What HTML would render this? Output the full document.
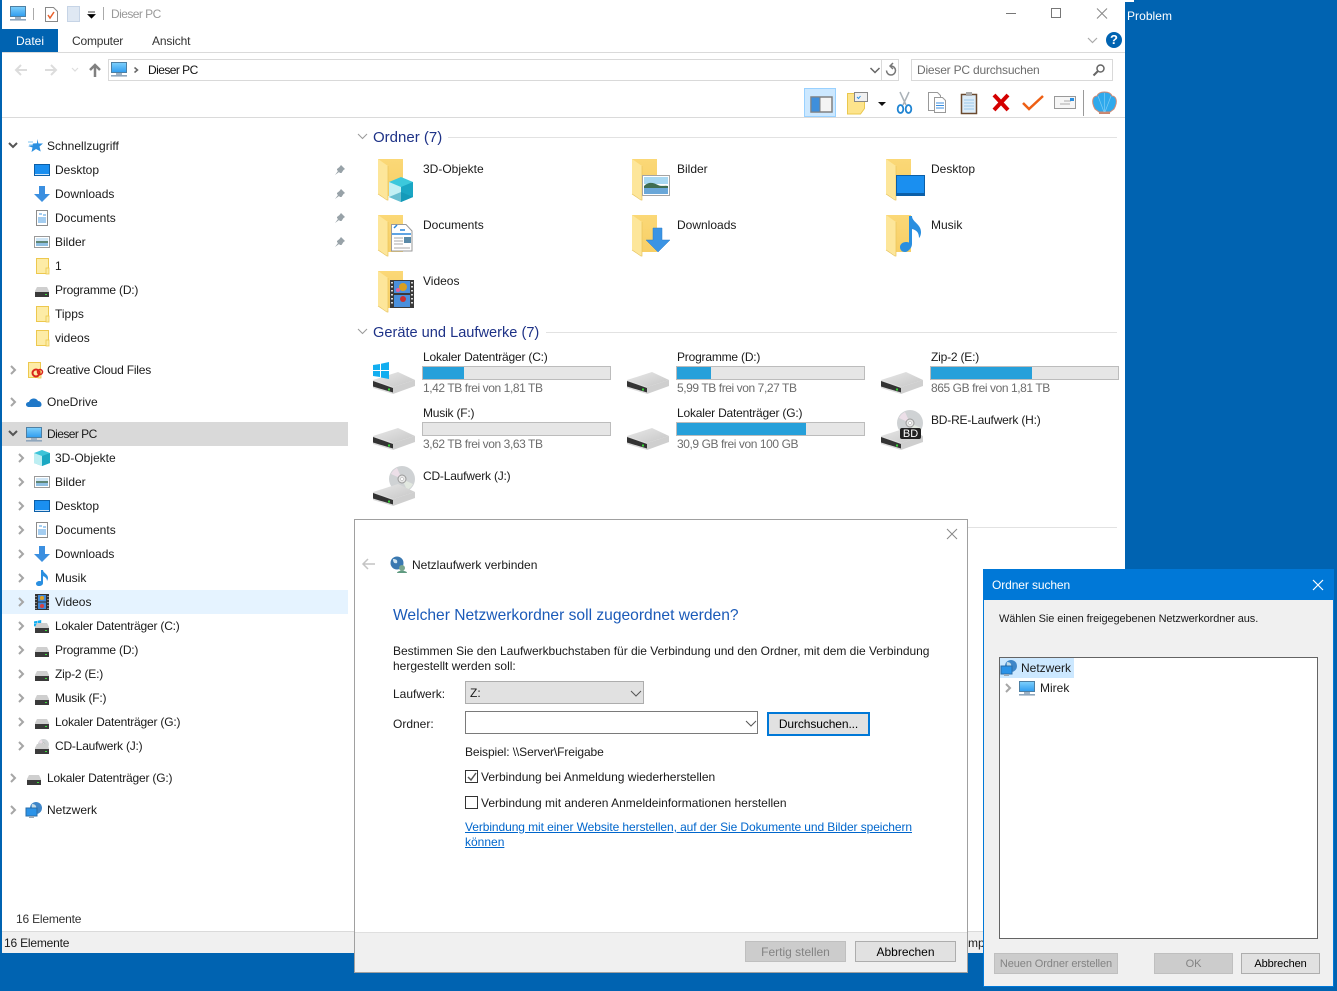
<!DOCTYPE html>
<html lang="de"><head><meta charset="utf-8"><title>Dieser PC</title>
<style>
html,body{margin:0;padding:0;width:1337px;height:991px;overflow:hidden;background:#0063b1;font:12px/16px "Liberation Sans",sans-serif;color:#1a1a1a}
div,span,a{position:absolute;white-space:nowrap}
svg{position:absolute;left:0;top:0;overflow:visible}
#win{left:2px;top:0;width:1123px;height:953px;background:#fff}
.g{color:#6d6d6d;letter-spacing:-.42px}
.l{letter-spacing:-.2px}
.p{letter-spacing:-.55px}
.h{font-size:15px;color:#1e3287;line-height:20px}
.box{box-sizing:border-box}
.bar{box-sizing:border-box;width:189px;height:14px;background:#e6e6e6;border:1px solid #bcbcbc}
.bar i{display:block;height:12px;background:#26a0da}
.btn{box-sizing:border-box;text-align:center;background:#e1e1e1;border:1px solid #adadad;color:#000}
.dis{background:#ccc;border-color:#bfbfbf;color:#838383}
.s{font-size:11px;letter-spacing:-.1px}
</style></head><body>
<svg width="0" height="0" style="position:absolute"><defs>
<linearGradient id="sky" x1="0" y1="0" x2="0" y2="1"><stop offset="0" stop-color="#7fd0fb"/><stop offset="1" stop-color="#2f9df0"/></linearGradient>
<linearGradient id="fo" x1="0" y1="0" x2="0" y2="1"><stop offset="0" stop-color="#fbd877"/><stop offset="1" stop-color="#f7cf66"/></linearGradient>
<linearGradient id="metal" x1="0" y1="0" x2="1" y2="1"><stop offset="0" stop-color="#e8e8e8"/><stop offset="1" stop-color="#c6c6c6"/></linearGradient>
<g id="cr"><path d="M-2-4 2 0-2 4" stroke="#a6a6a6" stroke-width="2" fill="none"/></g>
<g id="cd"><path d="M-4-2 0 2 4-2" stroke="#555" stroke-width="2" fill="none"/></g>
<g id="pc"><rect x=".5" y=".5" width="15" height="10" fill="url(#sky)" stroke="#4d7fa3"/><rect x="5" y="11" width="6" height="2" fill="#9fb2c4"/><rect x="0" y="13" width="16" height="1.6" fill="#8fa6bc"/></g>
<g id="desk"><rect x=".5" y=".5" width="15" height="11" fill="#1a8ff0" stroke="#0b5fa8"/><rect x="1" y="10" width="14" height="1" fill="#cfe6fa"/></g>
<g id="dl"><path d="M5 0h6v8h5l-8 8-8-8h5z" fill="#3b8fe0"/></g>
<g id="doc"><rect x=".5" y=".5" width="11" height="15" fill="#fff" stroke="#8c8c8c"/><path d="M3 4h3M7 5h3M2 8h8M2 10h8M2 12h8" stroke="#4a9be0"/></g>
<g id="pic"><rect x=".5" y=".5" width="15" height="11" fill="#fff" stroke="#9a9a9a"/><rect x="2" y="2" width="12" height="4" fill="#cfe6f6"/><rect x="2" y="5" width="12" height="2" fill="#5f8676"/><rect x="2" y="7" width="12" height="3" fill="#8fbfe2"/></g>
<g id="fs"><rect x=".5" y=".5" width="12" height="15" fill="#fdeca6" stroke="#edc84e"/><rect x="10" y="10" width="3" height="6" fill="#fdeca6" stroke="#edc84e" stroke-width=".8"/></g>
<g id="ds"><path d="M2 0h10l2 4v1H0V4z" fill="#cfcfcf"/><rect y="5" width="14" height="5" fill="#3a3a3a"/><rect x="10" y="7" width="2" height="1" fill="#3ddc3d"/></g>
<g id="pin"><path d="M6 0l4 4-1.500 1-2 3H5L2 5V4l2.500-2zM3 6 0 10l4-3z" fill="#98a2a8"/></g>
<g id="cube"><path d="M0 3 8 0l8 3v10l-8 3-8-3z" fill="#3cc4d8"/><path d="M0 3l8 3v10l-8-3z" fill="#bdeef2"/><path d="M8 6l8-3v10l-8 3z" fill="#1ba8c2"/></g>
<g id="note"><path d="M5 0h2c0 3 5 4 5 8 0 1-.5 2-1 3 0-3-2-4-4-5v7c0 2-2 3-4 3s-3-1-3-2.500S2 11 3.500 11c.5 0 1 0 1.500.3z" fill="#2a8fe0"/></g>
<g id="film"><rect width="14" height="16" fill="#333"/><rect x="3" y="1" width="8" height="6.500" fill="#3f88d8"/><rect x="3" y="8.500" width="8" height="6.500" fill="#3f88d8"/><circle cx="7" cy="4" r="2" fill="#e0a020"/><circle cx="7" cy="12" r="2" fill="#d84040"/><path d="M1 2v1M1 5v1M1 8v1M1 11v1M1 14v1M13 2v1M13 5v1M13 8v1M13 11v1M13 14v1" stroke="#ddd"/></g>
<g id="star"><path d="M9 0l1.500 4.500H15l-3.500 3 1.200 5L8 10l-4.500 3 1-4.500L0 7l4-.5 1-2 4-.2z" fill="#2a8fe0"/><path d="M0 3h5M1 6h4" stroke="#7fc4f2"/></g>
<g id="net"><circle cx="10" cy="6" r="6" fill="#3f86c8"/><path d="M6 2c3 0 5 2 4 5-3 1-5-1-4-5z" fill="#c4dce8"/><rect x="0" y="6" width="11" height="8" fill="#2b93e8" stroke="#2a6da8"/><rect x="3" y="14" width="5" height="2" fill="#99a9b8"/></g>
<g id="bf"><path d="M0 0H25V37H9L0 34z" fill="url(#fo)"/><path d="M0 0 10 7V41L0 35z" fill="#fde69a"/><path d="M10 7V41L9 41 0 35" fill="none" stroke="#e8c35a" stroke-width=".7"/></g>
<g id="bpic"><rect x=".5" y=".5" width="27" height="20" fill="#fff" stroke="#a4a4a4"/><rect x="2" y="2" width="24" height="7" fill="#a8d8f2"/><path d="M2 11c5-5 10-3 14-1s7 0 10 1v2H2z" fill="#3f6e52"/><rect x="2" y="13" width="24" height="6" fill="#6aa7d8"/></g>
<g id="bdoc"><path d="M.5.5H15L21 7V27H.5z" fill="#fff" stroke="#9a9a9a"/><path d="M3 4l3-3M9 6h5M1 10h19" stroke="#2a86da" stroke-width="1.500"/><path d="M3 14h9M3 17h9M3 20h9M3 24h16" stroke="#aaa"/><rect x="13" y="13" width="7" height="6" fill="#5a8aa8"/></g>
<g id="bdl"><path d="M7 0h9V12h8L12 24 0 12H7z" fill="#3b94e4" stroke="#2a7cc8" stroke-width=".5"/></g>
<g id="bfilm"><rect width="24" height="28" fill="#3a3a3a"/><rect x="4" y="1" width="16" height="12" fill="#4a90dc"/><rect x="4" y="15" width="16" height="12" fill="#4a90dc"/><circle cx="13" cy="7" r="4" fill="#d9a020"/><circle cx="13" cy="19" r="3" fill="#c83030"/><circle cx="8" cy="10" r="2" fill="#e060a0"/><path d="M2 2v1.500M2 6v1.500M2 10v1.500M2 14v1.500M2 18v1.500M2 22v1.500M22 2v1.500M22 6v1.500M22 10v1.500M22 14v1.500M22 18v1.500M22 22v1.500" stroke="#ddd" stroke-width="2"/></g>
<g id="bcube"><path d="M0 5 12 0l12 5v15l-12 5-12-5z" fill="#3cc8dc"/><path d="M0 5l12 5v15L0 20z" fill="#c2f0f4"/><path d="M12 10 24 5v15L12 25z" fill="#1aa6c4"/><path d="M0 20l12-5 12 5-12 5z" fill="#0f8eae" opacity=".5"/></g>
<g id="bdesk"><rect x=".5" y=".5" width="28" height="20" fill="#1a8ff0" stroke="#0b5fa8"/><rect x="1" y="18" width="27" height="2" fill="#0b5fa8"/></g>
<g id="bnote"><path d="M9 0h3c0 6 9 8 9 16 0 3-1 5-2 6 0-6-3-8-7-9v15c0 4-4 8-7 8s-5-2-5-5 3-5 6-5c1 0 2 0 3 .6z" fill="#2a8fe0"/></g>
<g id="drv"><path d="M0 8 25 0 42 8 20 15z" fill="url(#metal)"/><path d="M20 15 42 8v6L20 22z" fill="#cfcfcf"/><path d="M0 8 20 15v7L0 16z" fill="#dcdcdc"/><path d="M0 9 20 16v4.500L0 14.500z" fill="#333"/><rect x="15" y="16.500" width="2" height="2" fill="#35d535"/></g>
<g id="cdisc"><circle cx="13" cy="13" r="13" fill="#cfd2d4"/><path d="M13 13 2 8a13 13 0 0 1 6-6z" fill="#ecdfe8"/><path d="M13 13 24 18a13 13 0 0 1-6 6z" fill="#e2e8e0"/><circle cx="13" cy="13" r="4" fill="#e8e8e8" stroke="#999"/><circle cx="13" cy="13" r="1.500" fill="#fff" stroke="#aaa" stroke-width=".5"/></g>
<g id="winl"><path d="M0 3 7 2V8H0zM8 1.800 16 0V8H8zM0 9H7V15L0 14zM8 9H16V17L8 15.500z" fill="#12aef0"/></g>
</defs></svg>

<div id="win"></div>
<svg width="1337" height="991">
<!-- title -->
<use href="#pc" x="10" y="6"/>
<path d="M33.500 8v12M103.500 7v13" stroke="#aaa"/>
<path d="M45.500 7.500h8l4 4v10h-12z" fill="#fff" stroke="#888"/><path d="M48 15l2 3 4-6" stroke="#e8602c" stroke-width="1.500" fill="none"/>
<path d="M67.500 6.500h12v15h-12z" fill="#dfe8f3" stroke="#c6d4e6"/>
<path d="M88 12h7M88 14.500h7l-3.500 3.500z" fill="#000" stroke="#000" stroke-width=".8"/>
<path d="M1006 13.500h10" stroke="#777"/><rect x="1051.500" y="8.500" width="9" height="9" fill="none" stroke="#777"/><path d="M1097 8.500l10 10M1107 8.500l-10 10" stroke="#888"/>
<path d="M1088 38l4.500 4.500L1097 38" stroke="#aaa" fill="none" stroke-width="1.200"/>
<circle cx="1114" cy="40" r="8" fill="#0063b1"/>
<rect x="2" y="52" width="1123" height="1" fill="#dadada"/>
<!-- nav -->
<path d="M27 70H16M21 65l-5 5 5 5" stroke="#dcdcdc" stroke-width="2" fill="none"/>
<path d="M45 70H56M51 65l5 5-5 5" stroke="#dcdcdc" stroke-width="2" fill="none"/>
<path d="M72 68l3 3 3-3" stroke="#ddd" fill="none" stroke-width="1.200"/>
<path d="M95 77V65M90 70l5-5 5 5" stroke="#808080" stroke-width="2.500" fill="none"/>
<rect x="108.500" y="59.500" width="790" height="21" fill="#fff" stroke="#d9d9d9"/>
<path d="M881.500 60v20" stroke="#d9d9d9"/>
<use href="#pc" x="111" y="62"/>
<path d="M134.500 67.500l3 2.500-3 2.500" stroke="#666" fill="none" stroke-width="1.500"/>
<path d="M870.500 68l4.500 4.500 4.500-4.500" stroke="#666" fill="none" stroke-width="1.500"/>
<path d="M891 66a4.500 4.500 0 1 1-4.500 4.500M893 63l-3 3 3 3" stroke="#777" fill="none" stroke-width="1.500"/>
<rect x="911.500" y="59.500" width="201" height="21" fill="#fff" stroke="#d9d9d9"/>
<circle cx="1100.500" cy="68.500" r="3.500" fill="none" stroke="#666" stroke-width="1.500"/><path d="M1098 71l-4.500 4.500" stroke="#666" stroke-width="2"/>
<!-- toolbar -->
<rect x="804.500" y="88.500" width="31" height="28" fill="#cce8ff" stroke="#99d1ff"/>
<rect x="811" y="97" width="21" height="15" fill="#f4f4f4" stroke="#808080" stroke-width="1.500"/><rect x="811" y="97" width="9" height="15" fill="#3f8fdc" stroke="#808080" stroke-width="1"/>
<path d="M847.500 93.500h17v15l-4 5.500h-13z" fill="#fde48c" stroke="#eac84e"/><rect x="854.500" y="92.500" width="13" height="9" fill="#f0f0f0" stroke="#888"/><path d="M857 97l1.500 1.500 2-2.500" stroke="#2a8fe0" fill="none"/>
<path d="M878 102h8l-4 4z" fill="#111"/>
<path d="M900 92l6 13M909 92l-6 13" stroke="#aab2b8" stroke-width="1.500"/><ellipse cx="900.500" cy="109" rx="2.800" ry="4" fill="none" stroke="#1f84d2" stroke-width="1.800"/><ellipse cx="908.500" cy="109" rx="2.800" ry="4" fill="none" stroke="#1f84d2" stroke-width="1.800"/>
<path d="M928.500 92.500h9l3 3v15h-12z" fill="#fff" stroke="#999"/><path d="M934.500 97.500h8l3 3v12h-11z" fill="#fff" stroke="#999"/><path d="M936 103h8M936 105.500h8M936 108h8" stroke="#3b8fe0"/>
<rect x="961.500" y="94.500" width="15" height="19" fill="#dcecf8" stroke="#6b4a2f" stroke-width="1.500"/><rect x="966" y="92" width="6" height="4" fill="#aaa"/><path d="M964 100h10M964 103h10M964 106h10M964 109h10" stroke="#9cc8ea"/>
<path d="M994 95l14 15M1008 95l-14 15" stroke="#d40000" stroke-width="4"/>
<path d="M1023 103l6 6 14-13" stroke="#ee5f14" stroke-width="2.500" fill="none"/>
<rect x="1054.500" y="96.500" width="21" height="12" fill="#f6f6f6" stroke="#999"/><path d="M1060 104h10M1064 101h7" stroke="#aaa"/><rect x="1070" y="98" width="4" height="3" fill="#2a8fe0"/>
<path d="M1083.500 90v26" stroke="#9a9a9a"/>
<rect x="1099" y="110" width="11" height="4" fill="#c9866e"/>
<path d="M1095 109C1090 100 1094 96 1097 96 1098 93 1101 92 1104.500 92 1108 92 1111 93 1112 96 1115 96 1119 100 1114 109L1110 112H1099z" fill="#2fa9ec" stroke="#d18c78"/>
<path d="M1104.500 112V93M1104 112 1098 96M1105 112 1111 96" stroke="#7fcdf5" stroke-width=".7"/>
<rect x="2" y="117" width="1123" height="1" fill="#dadada"/>

<!-- sidebar -->
<rect x="2" y="422" width="346" height="24" fill="#d9d9d9"/>
<rect x="2" y="590" width="346" height="24" fill="#e5f3ff"/>
<use href="#cd" x="13" y="145"/><use href="#star" x="28" y="139"/>
<use href="#desk" x="34" y="164"/><use href="#dl" x="34" y="186"/><use href="#doc" x="36" y="210"/><use href="#pic" x="34" y="236"/>
<use href="#fs" x="36" y="258"/><use href="#ds" x="35" y="287"/><use href="#fs" x="36" y="306"/><use href="#fs" x="36" y="330"/>
<use href="#pin" x="335" y="165"/><use href="#pin" x="335" y="189"/><use href="#pin" x="335" y="213"/><use href="#pin" x="335" y="237"/>
<use href="#cr" x="13" y="370"/><use href="#fs" x="28" y="362"/><circle cx="36" cy="373" r="3.500" fill="none" stroke="#d9261c" stroke-width="2"/><circle cx="40" cy="372" r="2.500" fill="none" stroke="#d9261c" stroke-width="1.500"/>
<use href="#cr" x="13" y="402"/><path d="M29 407c-4 0-4-5 0-5 1-4 7-5 9-1 4 0 5 6 1 6z" fill="#1f78c8"/>
<use href="#cd" x="13" y="433"/><use href="#pc" x="26" y="427"/>
<use href="#cr" x="21" y="458"/><use href="#cube" x="34" y="450"/>
<use href="#cr" x="21" y="482"/><use href="#pic" x="34" y="476"/>
<use href="#cr" x="21" y="506"/><use href="#desk" x="34" y="500"/>
<use href="#cr" x="21" y="530"/><use href="#doc" x="36" y="522"/>
<use href="#cr" x="21" y="554"/><use href="#dl" x="34" y="546"/>
<use href="#cr" x="21" y="578"/><use href="#note" x="36" y="570"/>
<use href="#cr" x="21" y="602"/><use href="#film" x="35" y="594"/>
<use href="#cr" x="21" y="626"/><g transform="translate(34 620) scale(.45)"><use href="#winl"/></g><use href="#ds" x="35" y="623"/>
<use href="#cr" x="21" y="650"/><use href="#ds" x="35" y="647"/>
<use href="#cr" x="21" y="674"/><use href="#ds" x="35" y="671"/>
<use href="#cr" x="21" y="698"/><use href="#ds" x="35" y="695"/>
<use href="#cr" x="21" y="722"/><use href="#ds" x="35" y="719"/>
<use href="#cr" x="21" y="746"/><g transform="translate(38 739) scale(.42)"><use href="#cdisc"/></g><use href="#ds" x="35" y="744"/>
<use href="#cr" x="13" y="778"/><use href="#ds" x="27" y="775"/>
<use href="#cr" x="13" y="810"/><use href="#net" x="26" y="802"/>

<!-- content -->
<path d="M358 134l4.500 4.500 4.500-4.500M358 329l4.500 4.500 4.500-4.500" stroke="#9a9a9a" fill="none"/>
<path d="M448 137.500h669M546 332.500h571M355 527.500h762" stroke="#e2e2e2"/>
<use href="#bf" x="378" y="159"/><use href="#bcube" x="389" y="177"/>
<use href="#bf" x="632" y="159"/><use href="#bpic" x="642" y="175"/>
<use href="#bf" x="886" y="159"/><use href="#bdesk" x="896" y="175"/>
<use href="#bf" x="378" y="215"/><use href="#bdoc" x="391" y="224"/>
<use href="#bf" x="632" y="215"/><use href="#bdl" x="646" y="228"/>
<use href="#bf" x="886" y="215"/><use href="#bnote" x="900" y="216"/>
<use href="#bf" x="378" y="271"/><use href="#bfilm" x="390" y="280"/>
<use href="#drv" x="373" y="372"/><g transform="translate(373 362)"><use href="#winl"/></g>
<use href="#drv" x="627" y="372"/><use href="#drv" x="881" y="372"/>
<use href="#drv" x="373" y="428"/><use href="#drv" x="627" y="428"/>
<use href="#cdisc" x="897" y="410"/><use href="#drv" x="881" y="428"/>
<rect x="900" y="428" width="21" height="11" rx="2" fill="#222"/>
<use href="#cdisc" x="389" y="466"/><use href="#drv" x="373" y="484"/>
</svg>

<span style="left:111px;top:6px;color:#999" class="p">Dieser PC</span>
<div style="left:2px;top:29px;width:56px;height:23px;background:#0063b1;color:#fff;text-align:center;line-height:25px">Datei</div>
<span style="left:72px;top:33px;letter-spacing:-.2px;color:#333">Computer</span>
<span style="left:152px;top:33px;letter-spacing:-.15px;color:#333">Ansicht</span>
<span style="left:1110px;top:32px;width:8px;text-align:center;color:#fff;font-weight:bold;font-size:13px">?</span>
<span style="left:148px;top:62px;color:#111" class="p">Dieser PC</span>
<span style="left:917px;top:62px;letter-spacing:-.2px;color:#6d6d6d">Dieser PC durchsuchen</span>
<span style="left:1127px;top:8px;color:#fff;letter-spacing:.05px">Problem</span>
<div style="left:1125px;top:0;width:9px;height:2px;background:#fff"></div>

<span style="left:47px;top:138px">Schnellzugriff</span>
<span style="left:55px;top:162px">Desktop</span>
<span style="left:55px;top:186px">Downloads</span>
<span style="left:55px;top:210px">Documents</span>
<span style="left:55px;top:234px">Bilder</span>
<span style="left:55px;top:258px">1</span>
<span style="left:55px;top:282px" class="l">Programme (D:)</span>
<span style="left:55px;top:306px">Tipps</span>
<span style="left:55px;top:330px">videos</span>
<span style="left:47px;top:362px" class="l">Creative Cloud Files</span>
<span style="left:47px;top:394px">OneDrive</span>
<span style="left:47px;top:426px" class="p">Dieser PC</span>
<span style="left:55px;top:450px">3D-Objekte</span>
<span style="left:55px;top:474px">Bilder</span>
<span style="left:55px;top:498px">Desktop</span>
<span style="left:55px;top:522px">Documents</span>
<span style="left:55px;top:546px">Downloads</span>
<span style="left:55px;top:570px">Musik</span>
<span style="left:55px;top:594px">Videos</span>
<span style="left:55px;top:618px" class="l">Lokaler Datenträger (C:)</span>
<span style="left:55px;top:642px" class="l">Programme (D:)</span>
<span style="left:55px;top:666px" class="l">Zip-2 (E:)</span>
<span style="left:55px;top:690px" class="l">Musik (F:)</span>
<span style="left:55px;top:714px" class="l">Lokaler Datenträger (G:)</span>
<span style="left:55px;top:738px" class="l">CD-Laufwerk (J:)</span>
<span style="left:47px;top:770px" class="l">Lokaler Datenträger (G:)</span>
<span style="left:47px;top:802px">Netzwerk</span>
<span style="left:16px;top:911px;color:#333" class="l">16 Elemente</span>
<div style="left:2px;top:931px;width:1123px;height:22px;background:#f0f0f0;border-top:1px solid #dadada;box-sizing:border-box"></div>
<span style="left:4px;top:935px" class="l">16 Elemente</span>
<span style="left:968px;top:935px">mp</span>

<span class="h" style="left:373px;top:128px">Ordner (7)</span>
<span class="h" style="left:373px;top:323px;font-size:14.6px">Geräte und Laufwerke (7)</span>
<span style="left:423px;top:161px">3D-Objekte</span><span style="left:677px;top:161px">Bilder</span><span style="left:931px;top:161px">Desktop</span>
<span style="left:423px;top:217px">Documents</span><span style="left:677px;top:217px">Downloads</span><span style="left:931px;top:217px">Musik</span>
<span style="left:423px;top:273px">Videos</span>

<span style="left:423px;top:349px" class="l">Lokaler Datenträger (C:)</span>
<div class="bar" style="left:422px;top:366px"><i style="width:41px"></i></div>
<span class="g" style="left:423px;top:380px">1,42 TB frei von 1,81 TB</span>
<span style="left:677px;top:349px" class="l">Programme (D:)</span>
<div class="bar" style="left:676px;top:366px"><i style="width:34px"></i></div>
<span class="g" style="left:677px;top:380px">5,99 TB frei von 7,27 TB</span>
<span style="left:931px;top:349px" class="l">Zip-2 (E:)</span>
<div class="bar" style="left:930px;top:366px"><i style="width:101px"></i></div>
<span class="g" style="left:931px;top:380px">865 GB frei von 1,81 TB</span>
<span style="left:423px;top:405px" class="l">Musik (F:)</span>
<div class="bar" style="left:422px;top:422px"></div>
<span class="g" style="left:423px;top:436px">3,62 TB frei von 3,63 TB</span>
<span style="left:677px;top:405px" class="l">Lokaler Datenträger (G:)</span>
<div class="bar" style="left:676px;top:422px"><i style="width:129px"></i></div>
<span class="g" style="left:677px;top:436px">30,9 GB frei von 100 GB</span>
<span style="left:931px;top:412px" class="l">BD-RE-Laufwerk (H:)</span>
<span style="left:900px;top:426px;width:21px;text-align:center;color:#fff;font-size:11px">BD</span>
<span style="left:423px;top:468px" class="l">CD-Laufwerk (J:)</span>

<!-- Netzlaufwerk dialog -->
<div class="box" style="left:354px;top:519px;width:614px;height:454px;background:#fff;border:1px solid #a0a0a0">
<div class="box" style="left:0;top:412px;width:612px;height:40px;background:#f0f0f0;border-top:1px solid #dfdfdf"></div>
<span style="left:57px;top:37px">Netzlaufwerk verbinden</span>
<span style="left:38px;top:86px;font-size:15.6px;line-height:20px;color:#1a5ab8">Welcher Netzwerkordner soll zugeordnet werden?</span>
<span style="left:38px;top:123px;letter-spacing:-.02px">Bestimmen Sie den Laufwerkbuchstaben für die Verbindung und den Ordner, mit dem die Verbindung</span>
<span style="left:38px;top:138px">hergestellt werden soll:</span>
<span style="left:38px;top:166px">Laufwerk:</span>
<div class="box" style="left:110px;top:161px;width:179px;height:23px;background:#e1e1e1;border:1px solid #adadad;padding-left:4px;line-height:22px">Z:</div>
<span style="left:38px;top:196px">Ordner:</span>
<div class="box" style="left:110px;top:191px;width:293px;height:23px;background:#fff;border:1px solid #7a7a7a"></div>
<div class="btn" style="left:412px;top:192px;width:103px;height:24px;border:2px solid #0078d7;line-height:20px;letter-spacing:-.1px">Durchsuchen...</div>
<span style="left:110px;top:224px;letter-spacing:-.1px">Beispiel: \\Server\Freigabe</span>
<span style="left:126px;top:249px">Verbindung bei Anmeldung wiederherstellen</span>
<span style="left:126px;top:275px">Verbindung mit anderen Anmeldeinformationen herstellen</span>
<a style="left:110px;top:299px;color:#0066cc;text-decoration:underline;letter-spacing:-.085px">Verbindung mit einer Website herstellen, auf der Sie Dokumente und Bilder speichern</a>
<a style="left:110px;top:314px;color:#0066cc;text-decoration:underline">können</a>
<div class="btn dis" style="left:390px;top:421px;width:101px;height:21px;line-height:20px">Fertig stellen</div>
<div class="btn" style="left:500px;top:421px;width:101px;height:21px;line-height:20px">Abbrechen</div>
<svg width="612" height="452">
<path d="M592 9l10 10M602 9l-10 10" stroke="#888"/>
<path d="M20 44H8M13 39l-5 5 5 5" stroke="#c4c4c4" stroke-width="1.500" fill="none"/>
<circle cx="42" cy="43" r="6.500" fill="#3a78b0"/><path d="M38 39c3 0 5 1 4 4-3 1-4-1-4-4z" fill="#d0e4f0"/><circle cx="47" cy="48" r="3" fill="#7aa68e"/><path d="M42 53c0-3 10-3 10 0z" fill="#5f9a80"/>
<path d="M276 171l5 5 5-5" stroke="#555" fill="none"/>
<path d="M391 201l5 5 5-5" stroke="#555" fill="none"/>
<rect x="110.500" y="250.500" width="12" height="12" fill="#fff" stroke="#333"/><path d="M113 257l3 3 5-7" stroke="#555" stroke-width="1.500" fill="none"/>
<rect x="110.500" y="276.500" width="12" height="12" fill="#fff" stroke="#333"/>
</svg>
</div>

<!-- Ordner suchen dialog -->
<div class="box" style="left:983px;top:569px;width:351px;height:418px;background:#f0f0f0;border:1px solid #0078d7">
<div style="left:0;top:0;width:349px;height:30px;background:#0078d7;color:#fff;line-height:31px;padding-left:8px;box-sizing:border-box;letter-spacing:-.1px">Ordner suchen</div>
<svg width="349" height="416"><path d="M329 10l10 10M339 10l-10 10" stroke="#fff" stroke-width="1.200"/></svg>
<span class="s" style="left:15px;top:41px">Wählen Sie einen freigegebenen Netzwerkordner aus.</span>
<div class="box" style="left:15px;top:87px;width:319px;height:282px;background:#fff;border:1px solid #646464">
<div style="left:0;top:0;width:74px;height:20px;background:#cce8ff"></div>
<svg width="317" height="280"><use href="#net" x="1" y="2"/><use href="#cr" x="8" y="30"/><use href="#pc" x="19" y="23"/></svg>
<span style="left:21px;top:2px">Netzwerk</span>
<span style="left:40px;top:22px">Mirek</span>
</div>
<div class="btn dis s" style="left:10px;top:383px;width:124px;height:21px;line-height:21px">Neuen Ordner erstellen</div>
<div class="btn dis s" style="left:170px;top:383px;width:79px;height:21px;line-height:21px">OK</div>
<div class="btn s" style="left:257px;top:383px;width:79px;height:21px;line-height:21px">Abbrechen</div>
</div>
</body></html>
